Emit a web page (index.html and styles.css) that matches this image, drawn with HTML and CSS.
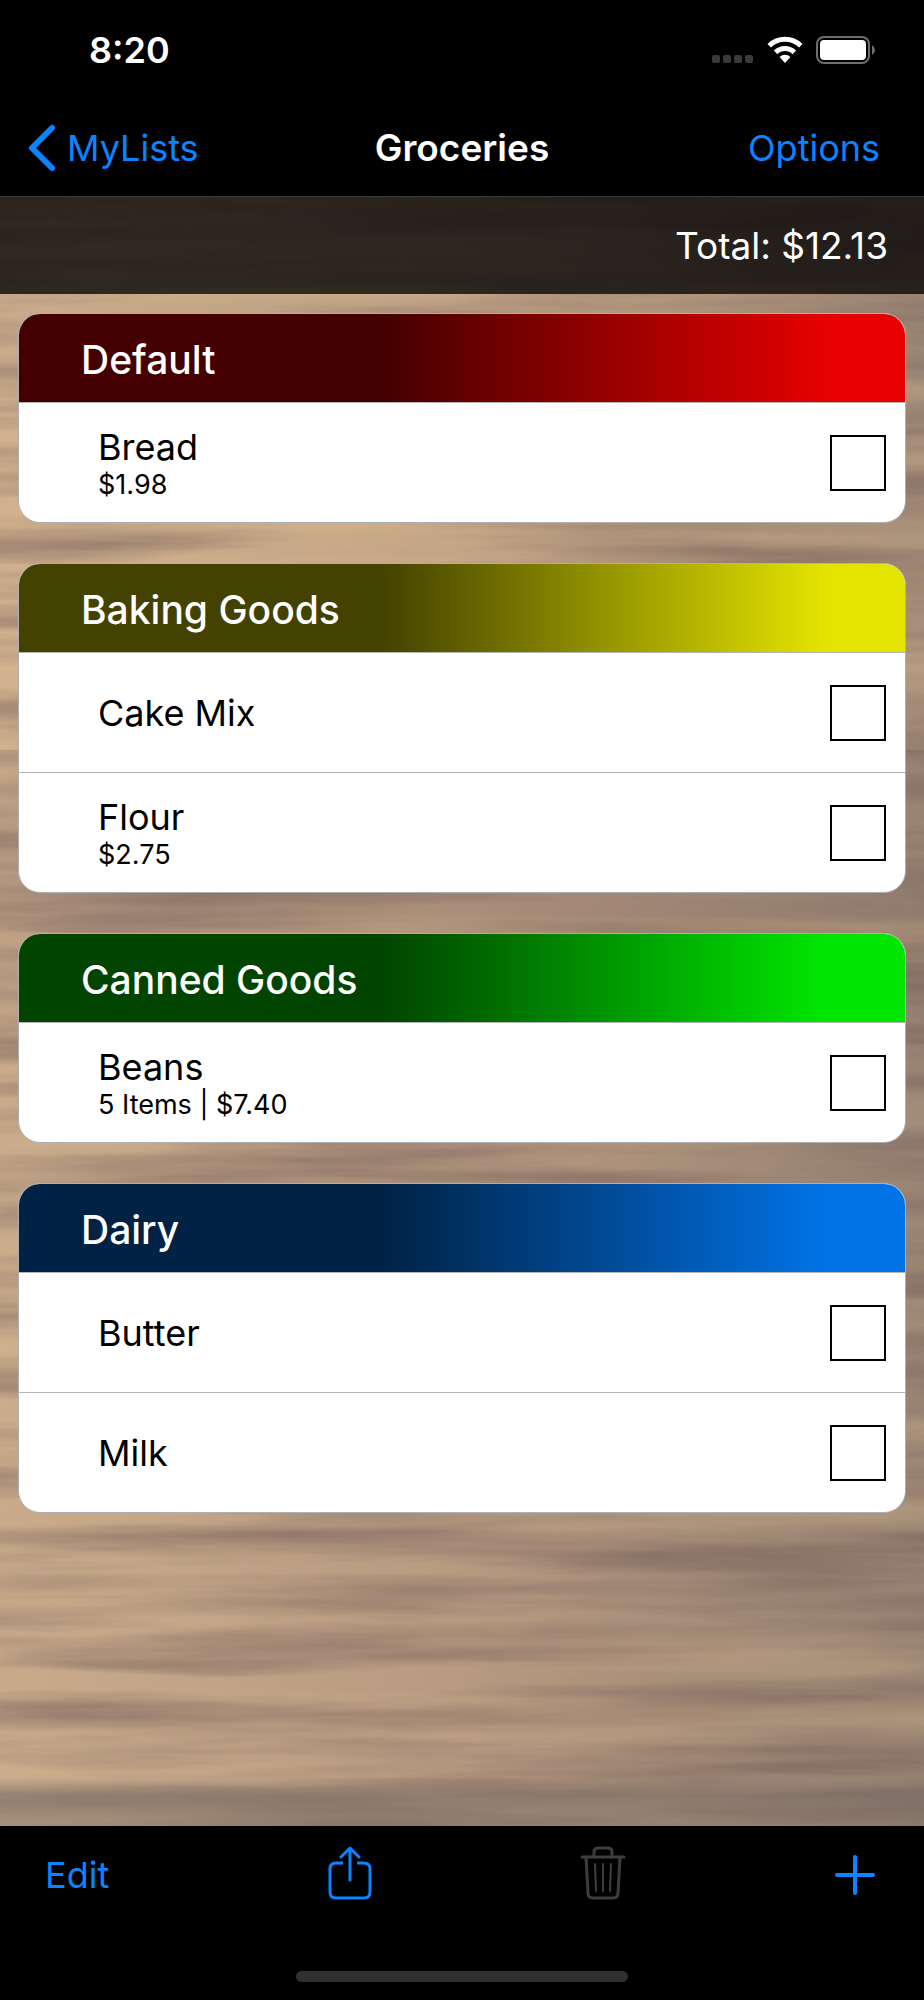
FILE: index.html
```html
<!DOCTYPE html>
<html lang="en">
<head>
    <meta charset="UTF-8">
    <meta name="viewport" content="width=device-width, initial-scale=1.0">
    <title>Groceries</title>
    <link rel="stylesheet" href="styles.css">
</head>
<body>
    <header class="top">
        <div class="status-bar">
            <span class="time">8:20</span>
            <div class="status-icons">
                <svg width="42" height="28" viewBox="0 0 42 28" fill="#3a3a3a">
                    <rect x="0" y="19" width="8" height="8" rx="2"/>
                    <rect x="11" y="19" width="8" height="8" rx="2"/>
                    <rect x="22" y="19" width="8" height="8" rx="2"/>
                    <rect x="33" y="19" width="8" height="8" rx="2"/>
                </svg>
                <svg width="36" height="28" viewBox="0 0 36 28" fill="none" stroke="#fff" stroke-width="5">
                    <path d="M2.2 9.8 A22.6 22.6 0 0 1 33.8 9.8"/>
                    <path d="M8.6 16.4 A13.4 13.4 0 0 1 27.4 16.4"/>
                    <path d="M12.6 21 A7.7 7.7 0 0 1 23.4 21 L18 27 Z" fill="#fff" stroke="none"/>
                </svg>
                <svg width="60" height="28" viewBox="0 0 60 28">
                    <rect x="1" y="1" width="52" height="26" rx="7" fill="none" stroke="#6e6e6e" stroke-width="2"/>
                    <rect x="4" y="4" width="46" height="20" rx="4" fill="#fff"/>
                    <path d="M56 9 Q59 11 59 14 Q59 17 56 19 Z" fill="#6e6e6e"/>
                </svg>
            </div>
        </div>
        <nav class="nav-bar">
            <a class="back" href="#">
                <svg width="28" height="48" viewBox="0 0 28 48" fill="none" stroke="currentColor" stroke-width="6" stroke-linecap="round" stroke-linejoin="round">
                    <path d="M24 4 L4 24 L24 44"/>
                </svg>
                MyLists
            </a>
            <h1>Groceries</h1>
            <button type="button" class="options">Options</button>
        </nav>
    </header>

    <main class="content">
        <svg class="wood" width="100%" height="100%" aria-hidden="true">
            <defs>
                <filter id="grain" x="0" y="0" width="100%" height="100%" color-interpolation-filters="sRGB">
                    <feTurbulence type="fractalNoise" baseFrequency="0.002 0.03" numOctaves="5" seed="14"/>
                    <feColorMatrix values="0 0 0 0 0.40  0 0 0 0 0.32  0 0 0 0 0.32  1.1 0 0 0 -0.42"/>
                </filter>
                <filter id="light" x="0" y="0" width="100%" height="100%" color-interpolation-filters="sRGB">
                    <feTurbulence type="fractalNoise" baseFrequency="0.001 0.018" numOctaves="5" seed="5"/>
                    <feColorMatrix values="0 0 0 0 0.88  0 0 0 0 0.75  0 0 0 0 0.58  0 1 0 0 -0.42"/>
                </filter>
                <linearGradient id="base">
                    <stop offset="0" stop-color="#c9ab8b"/>
                    <stop offset="0.5" stop-color="#b79a80"/>
                    <stop offset="1" stop-color="#978272"/>
                </linearGradient>
                <linearGradient id="end" x2="0" y2="1">
                    <stop offset="0" stop-color="#6c625f" stop-opacity="0"/>
                    <stop offset="0.4" stop-color="#6c625f" stop-opacity="0.5"/>
                    <stop offset="1" stop-color="#6c625f" stop-opacity="0.4"/>
                </linearGradient>
            </defs>
            <rect width="100%" height="100%" fill="url(#base)"/>
            <rect class="plank-light" y="14%" width="100%" height="20%"/>
            <rect class="plank-dark" y="34%" width="100%" height="18%"/>
            <rect width="100%" height="100%" filter="url(#grain)"/>
            <rect width="100%" height="100%" filter="url(#light)"/>
            <rect y="97%" width="100%" height="3%" fill="url(#end)"/>
        </svg>

        <div class="total">Total: $12.13</div>

        <div class="lists">
            <section class="card">
                <h2 class="red">Default</h2>
                <label class="item">
                    <span class="text">
                        <span class="name">Bread</span>
                        <span class="detail">$1.98</span>
                    </span>
                    <input type="checkbox">
                </label>
            </section>

            <section class="card">
                <h2 class="yellow">Baking Goods</h2>
                <label class="item">
                    <span class="text"><span class="name">Cake Mix</span></span>
                    <input type="checkbox">
                </label>
                <label class="item">
                    <span class="text">
                        <span class="name">Flour</span>
                        <span class="detail">$2.75</span>
                    </span>
                    <input type="checkbox">
                </label>
            </section>

            <section class="card">
                <h2 class="green">Canned Goods</h2>
                <label class="item">
                    <span class="text">
                        <span class="name">Beans</span>
                        <span class="detail">5 Items | $7.40</span>
                    </span>
                    <input type="checkbox">
                </label>
            </section>

            <section class="card">
                <h2 class="blue">Dairy</h2>
                <label class="item">
                    <span class="text"><span class="name">Butter</span></span>
                    <input type="checkbox">
                </label>
                <label class="item">
                    <span class="text"><span class="name">Milk</span></span>
                    <input type="checkbox">
                </label>
            </section>
        </div>
    </main>

    <footer class="bottom">
        <div class="toolbar">
            <button type="button" class="edit">Edit</button>
            <button type="button" aria-label="Share">
                <svg width="44" height="60" viewBox="0 0 44 60" fill="none" stroke="currentColor" stroke-width="3" stroke-linecap="round" stroke-linejoin="round">
                    <path d="M15 18 H8 Q2 18 2 24 V47 Q2 53 8 53 H36 Q42 53 42 47 V24 Q42 18 36 18 H29" stroke-linecap="butt"/>
                    <path d="M22 35 V3 M13 12 L22 3 L31 12"/>
                </svg>
            </button>
            <button type="button" aria-label="Delete" disabled>
                <svg width="46" height="60" viewBox="0 0 46 60" fill="none" stroke="currentColor" stroke-width="3" stroke-linecap="round" stroke-linejoin="round">
                    <path d="M2 12 H44"/>
                    <path d="M14 12 V7 Q14 3 18 3 H28 Q32 3 32 7 V12"/>
                    <path d="M6 12 L8 48 Q8 53 13 53 H33 Q38 53 38 48 L40 12"/>
                    <path d="M15 19 L16 46 M23 19 V46 M31 19 L30 46" stroke-width="2"/>
                </svg>
            </button>
            <button type="button" aria-label="Add">
                <svg width="40" height="40" viewBox="0 0 40 40" fill="none" stroke="currentColor" stroke-width="4" stroke-linecap="round">
                    <path d="M20 2 V38 M2 20 H38"/>
                </svg>
            </button>
        </div>
        <div class="home-indicator"></div>
    </footer>
</body>
</html>
```

FILE: styles.css
```css
* {
    box-sizing: border-box;
}

body {
    margin: 0;
    min-height: 100vh;
    display: flex;
    flex-direction: column;
    background-color: black;
    color: white;
    font-family: Inter, "Liberation Sans", sans-serif;
    font-size: 36px;
    line-height: 44px;
}

svg {
    display: block;
}

h1,
h2 {
    margin: 0;
}

button {
    padding: 0;
    border: none;
    background: none;
    color: #0a84ff;
    font: inherit;
    cursor: pointer;
}

button:disabled {
    color: #3d3d3d;
}

.status-bar {
    display: flex;
    justify-content: space-between;
    align-items: center;
    height: 100px;
    padding: 0 48px 0 89px;
}

.time {
    font-weight: 600;
}

.status-icons {
    display: flex;
    gap: 13px;
}

.nav-bar {
    display: grid;
    grid-template-columns: 1fr auto 1fr;
    align-items: center;
    height: 96px;
    padding: 0 28px;
}

.back {
    display: flex;
    align-items: center;
    gap: 11px;
    color: #0a84ff;
    text-decoration: none;
}

h1 {
    font-size: 37px;
    font-weight: 600;
}

.options {
    justify-self: end;
    padding-right: 16px;
}

.content {
    position: relative;
    flex: 1;
}

.wood {
    position: absolute;
    inset: 0;
    z-index: -1;
}

.plank-light {
    fill: rgba(236, 202, 150, 0.18);
}

.plank-dark {
    fill: rgba(110, 88, 86, 0.18);
}

.total {
    height: 98px;
    padding: 0 36px;
    border-top: 1px solid #3a3735;
    background-color: rgba(0, 0, 0, 0.76);
    font-size: 37px;
    line-height: 98px;
    text-align: right;
}

.lists {
    display: flex;
    flex-direction: column;
    gap: 40px;
    padding: 19px 18px 40px;
}

.card {
    overflow: hidden;
    border: 1px solid #adb0b2;
    border-radius: 22px;
    background-color: white;
    color: black;
}

.card h2 {
    height: 88px;
    padding-left: 62px;
    color: white;
    font-size: 39px;
    font-weight: 500;
    line-height: 92px;
}

.red {
    background: linear-gradient(to right, #440000 41%, #e60000 91%);
}

.yellow {
    background: linear-gradient(to right, #444200 41%, #e4e400 91%);
}

.green {
    background: linear-gradient(to right, #004400 41%, #00e600 91%);
}

.blue {
    background: linear-gradient(to right, #002245 41%, #0073e6 91%);
}

.item {
    display: flex;
    justify-content: space-between;
    align-items: center;
    height: 120px;
    padding: 0 19px 0 79px;
    border-top: 1px solid #b5b5b5;
}

.text {
    display: flex;
    flex-direction: column;
}

.detail {
    font-size: 27px;
    line-height: 32px;
}

input[type="checkbox"] {
    appearance: none;
    width: 56px;
    height: 56px;
    margin: 0;
    border: 2px solid black;
}

input[type="checkbox"]:checked {
    background-color: black;
    box-shadow: inset 0 0 0 8px white;
}

.bottom {
    height: 174px;
}

.toolbar {
    display: flex;
    justify-content: space-between;
    align-items: center;
    height: 98px;
    padding: 0 49px 0 45px;
}

.edit {
    min-width: 74px;
    text-align: left;
}

.home-indicator {
    width: 36%;
    height: 11px;
    margin: 47px auto 0;
    border-radius: 6px;
    background-color: #303030;
}
```
